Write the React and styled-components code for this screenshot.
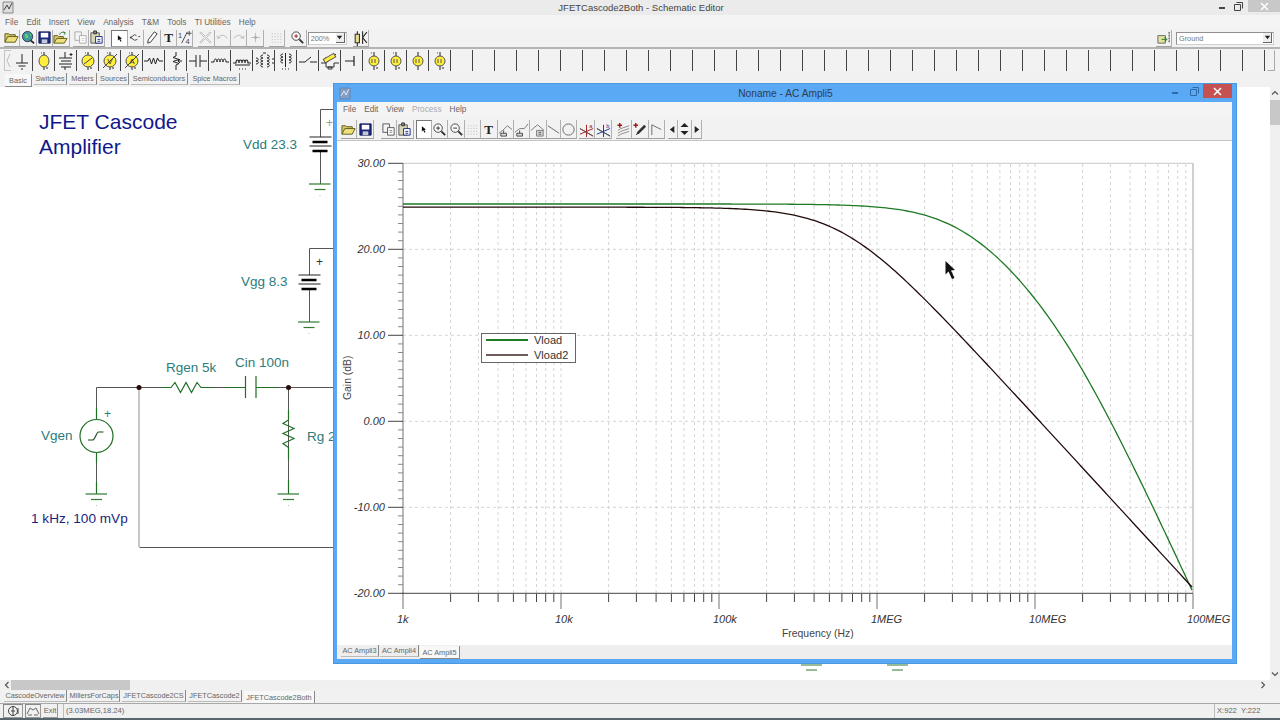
import React from "react";
import styled, { createGlobalStyle } from "styled-components";

const GlobalStyle = createGlobalStyle`
  html, body { margin: 0; padding: 0; background: #fff; overflow: hidden; }
  * { box-sizing: border-box; }
  body { font-family: "Liberation Sans", Arial, sans-serif; }
`;

const Screen = styled.div`
  position: relative;
  width: 1280px;
  height: 720px;
  overflow: hidden;
  display: flex;
  flex-direction: column;
  background: #fff;
  color: #444;
`;

const Svg = styled.svg`
  display: block;
  flex: none;
`;

/* title bar */
const TitleBar = styled.div`
  height: 15px;
  display: grid;
  grid-template-columns: 1fr auto 1fr;
  align-items: center;
  background: #ebebeb;
  padding-left: 2px;
`;
const TitleText = styled.div`
  font-size: 9.5px;
  color: #444;
`;
const Controls = styled.div`
  display: flex;
  justify-content: flex-end;
  align-items: stretch;
  align-self: start;
  height: ${(p) => p.$h}px;
`;
const CtlButton = styled.div`
  width: ${(p) => p.$w}px;
  display: flex;
  align-items: center;
  justify-content: center;
  background: ${(p) => p.$bg || "transparent"};
`;

/* menus */
const MenuBar = styled.div`
  display: flex;
  align-items: center;
  gap: ${(p) => p.$gap}px;
  height: ${(p) => p.$h}px;
  padding-left: ${(p) => p.$pl}px;
  background: #f4f4f4;
  font-size: 8.2px;
  color: #666;
`;
const MenuItem = styled.span`
  color: ${(p) => (p.$off ? "#aaa" : "inherit")};
  white-space: nowrap;
`;

/* tool rows */
const ToolRow = styled.div`
  display: flex;
  align-items: center;
  height: 20px;
  background: #f2f2f2;
  border-bottom: 2px solid #b4b4b4;
  padding-left: 4px;
`;
const ToolGroup = styled.div`
  display: flex;
  margin-left: ${(p) => p.$ml || 0}px;
`;
const ToolButton = styled.div`
  width: ${(p) => p.$w || 16.4}px;
  height: 17px;
  display: flex;
  align-items: center;
  justify-content: center;
  background: ${(p) => (p.$on ? "#fff" : "transparent")};
  border-right: 1px solid #b0b0b0;
  border-bottom: 1px solid #a0a0a0;
  border-left: ${(p) => (p.$on ? "1px solid #777" : "none")};
  border-top: ${(p) => (p.$on ? "1px solid #777" : "none")};
`;
const Combo = styled.div`
  width: ${(p) => p.$w}px;
  height: 13px;
  margin-left: ${(p) => p.$ml || 0}px;
  margin-right: ${(p) => p.$mr || 0}px;
  display: flex;
  align-items: center;
  justify-content: space-between;
  background: #fff;
  border: 1px solid #909090;
  border-bottom-color: #d0d0d0;
  border-right-color: #d0d0d0;
  font-size: 7.3px;
  color: #777;
  padding-left: 2px;
`;
const ComboArrow = styled.div`
  width: 9px;
  height: 10px;
  display: flex;
  align-items: center;
  justify-content: center;
  background: #eee;
  border-right: 1px solid #666;
  border-bottom: 1px solid #666;
  margin-right: 1px;
`;
const Spring = styled.div`
  flex: 1;
`;

/* component palette */
const PaletteRow = styled.div`
  display: flex;
  height: 24px;
  align-items: flex-start;
  padding: 1px 0 0 4px;
  background: #f2f2f2;
`;
const PaletteGrip = styled.div`
  width: 7px;
  height: 21px;
  display: flex;
  align-items: center;
  justify-content: center;
  border: 1px solid #c4c4c4;
  border-right: none;
`;
const PaletteCell = styled.div`
  width: 22px;
  height: 21px;
  flex: none;
  display: flex;
  align-items: center;
  justify-content: center;
  border-right: 1px solid #444;
`;
const PaletteEnd = styled.div`
  width: 8px;
  height: 21px;
  margin-left: 2px;
  border: 1px solid #aaa;
  border-left-color: #eee;
  border-top-color: #eee;
`;

/* tabs */
const TabRow = styled.div`
  display: flex;
  height: ${(p) => p.$h}px;
  padding-left: ${(p) => p.$pl}px;
  align-items: flex-start;
  background: ${(p) => p.$bg || "#f1f1f1"};
  flex: none;
`;
const Tab = styled.div`
  width: ${(p) => p.$w}px;
  height: ${(p) => (p.$on ? 13 : 12)}px;
  margin-right: ${(p) => p.$mr ?? 2}px;
  margin-top: ${(p) => (p.$on ? 1 : 0)}px;
  display: flex;
  align-items: center;
  justify-content: center;
  font-size: 7.3px;
  color: #666;
  white-space: nowrap;
  background: ${(p) => (p.$on ? "#f8f8f8" : "transparent")};
  border-right: 1px solid #888;
  border-bottom: ${(p) => (p.$on ? "1px solid #888" : "1px solid #bbb")};
`;

/* canvas */
const Canvas = styled.div`
  flex: 1;
  min-height: 0;
  display: flex;
  background: #fff;
`;
const Sheet = styled.div`
  flex: 1;
  min-width: 0;
`;
const VScroll = styled.div`
  width: 10px;
  display: flex;
  flex-direction: column;
  align-items: center;
  background: #f0f0f0;
  padding: 2px 0;
`;
const VThumb = styled.div`
  width: 100%;
  height: 25px;
  margin-top: 3px;
  background: #c8c8c8;
`;
const HScroll = styled.div`
  flex: none;
  height: 10px;
  display: flex;
  align-items: center;
  background: #f0f0f0;
  padding: 0 13px 0 3px;
`;
const HThumb = styled.div`
  width: 119px;
  height: 10px;
  background: #c8c8c8;
`;

/* status */
const StatusBar = styled.div`
  flex: none;
  height: 17px;
  display: flex;
  align-items: center;
  background: #f0f0f0;
  border-top: 1px solid #a8a8a8;
  border-bottom: 2px solid #56666c;
  padding: 0 2px 0 3px;
  font-size: 7.6px;
  color: #666;
`;
const StatusButton = styled.div`
  width: ${(p) => p.$w}px;
  height: 14px;
  margin-right: 2px;
  display: flex;
  align-items: center;
  justify-content: center;
  border-right: 1px solid #999;
  border-bottom: 1px solid #999;
  border-left: ${(p) => (p.$in ? "1px solid #888" : "none")};
  border-top: ${(p) => (p.$in ? "1px solid #888" : "none")};
`;
const StatusText = styled.div`
  margin-left: ${(p) => p.$ml || 0}px;
  width: ${(p) => p.$w || "auto"};
  height: 14px;
  line-height: 13px;
  padding-left: 2px;
  border-left: 1px solid #bbb;
  white-space: nowrap;
`;

/* floating AC window */
const Window = styled.div`
  position: absolute;
  left: 333px;
  top: 83px;
  width: 904px;
  height: 581px;
  display: flex;
  flex-direction: column;
  background: #5aa9f4;
  border: 1px solid #4b98e2;
  padding: 0 4px 4px 3px;
`;
const WinTitle = styled.div`
  flex: none;
  height: 18px;
  display: grid;
  grid-template-columns: 1fr auto 1fr;
  align-items: start;
  padding-left: 2px;
`;
const WinIcon = styled(Svg)`
  margin-top: 3px;
`;
const WinTitleText = styled.div`
  font-size: 10.2px;
  line-height: 20px;
  color: #2c3e50;
`;
const WinToolRow = styled.div`
  flex: none;
  display: flex;
  height: 24px;
  align-items: center;
  padding: 2px 0 0 4px;
  background: #f2f2f2;
  border-bottom: 1px solid #c4c4c4;
`;
const WinButton = styled(ToolButton)`
  height: 19px;
`;
const PlotArea = styled.div`
  position: relative;
  flex: none;
  height: 504px;
  background: #fff;
`;
const Legend = styled.div`
  position: absolute;
  left: 144px;
  top: 192px;
  width: 95px;
  height: 30px;
  padding-left: 4px;
  background: #fff;
  border: 1px solid #666;
  font-size: 11px;
  color: #333;
`;
const LegendRow = styled.div`
  display: flex;
  align-items: center;
  gap: 6px;
  height: 15px;
  &:first-child {
    margin-top: -2px;
  }
`;
const LegendLine = styled.div`
  width: 42px;
  height: 2px;
  background: ${(p) => p.$color};
`;

/* icons */
const Icon = ({ size = 15, vb = 16, children }) => (
  <Svg width={size} height={size} viewBox={`0 0 ${vb} ${vb}`}>{children}</Svg>
);

const FolderIcon = () => (
  <Icon>
    <path d="M1 13V4h4l1 1h6v3" fill="#d8c868" stroke="#5c5c20" />
    <path d="M1 13l3-6h11l-3 6z" fill="#efe07a" stroke="#5c5c20" />
  </Icon>
);
const GlobeIcon = () => (
  <Icon>
    <circle cx="7" cy="7" r="5.5" fill="#3a9a9a" stroke="#335" />
    <path d="M4 4l3 1 1 3-3 1zM9 3l2 2-1 1z" fill="#6fd06f" />
    <path d="M10 11l4 3" stroke="#333" strokeWidth="2" />
  </Icon>
);
const SaveIcon = () => (
  <Icon>
    <path d="M2 2h12v12H2z" fill="#1c2a80" stroke="#111a55" />
    <path d="M4 3h8v5H4z" fill="#fff" />
    <path d="M5 10h6v4H5z" fill="#c4c8d8" />
  </Icon>
);
const FolderArrowIcon = () => (
  <Icon>
    <path d="M1 14V6h4l1 1h5v2" fill="#d8c868" stroke="#5c5c20" />
    <path d="M1 14l3-5h11l-3 5z" fill="#efe07a" stroke="#5c5c20" />
    <path d="M7 5c1-3 4-3 6-2m0 0l-2-1m2 1l-1 2" fill="none" stroke="#2a7a2a" />
  </Icon>
);
const CopyIcon = ({ dim }) => (
  <Icon>
    <path d="M2 2h7v9H2z" fill="#f4f4f4" stroke={dim ? "#aaa" : "#555"} />
    <path d="M7 6h7v8H7z" fill="#fff" stroke={dim ? "#aaa" : "#555"} />
    <path d="M9 9h3M9 11h3" stroke={dim ? "#ccc" : "#888"} />
  </Icon>
);
const PasteIcon = () => (
  <Icon>
    <path d="M2 3h9v11H2z" fill="#d8d4b8" stroke="#555" />
    <path d="M5 1h3v3H5z" fill="#888" stroke="#333" />
    <path d="M7 7h7v7H7z" fill="#fff" stroke="#1c2a80" />
    <path d="M9 10h3M9 12h3" stroke="#1c2a80" />
  </Icon>
);
const CursorIcon = () => (
  <Icon size={13}>
    <path d="M6 4l5 4-2 .5 1.5 3-1.3.5L7.8 9 6 10.5z" fill="#111" />
  </Icon>
);
const WireIcon = () => (
  <Icon>
    <path d="M3 8l4-3M3 8l4 3M7 5l2 1M7 11l3-1M11 7h2" stroke="#444" fill="none" />
    <circle cx="3" cy="8" r="1" fill="#444" />
  </Icon>
);
const PenIcon = () => (
  <Icon>
    <path d="M11 2l3 2-7 9-3 1 .5-3.5z" fill="#fff" stroke="#333" />
  </Icon>
);
const LetterIcon = ({ children, color = "#222" }) => (
  <Icon>
    <text x="8" y="13" textAnchor="middle" fontFamily="'Liberation Serif', serif" fontWeight="bold" fontSize="14" fill={color}>
      {children}
    </text>
  </Icon>
);
const QuarterIcon = () => (
  <Icon>
    <text x="1" y="9" fontFamily="'Liberation Sans', sans-serif" fontSize="8" fill="#444">1</text>
    <text x="9" y="15" fontFamily="'Liberation Sans', sans-serif" fontSize="8" fill="#444">4</text>
    <path d="M5 14L11 2M13 1v5M10.5 3.5h5" stroke="#444" fill="none" />
  </Icon>
);
const GrayCrossIcon = () => (
  <Icon>
    <path d="M3 2l5 5 5-5 1 1-5 5 5 5-1 1-5-5-5 5-1-1 5-5-5-5z" fill="#f4f4f4" stroke="#bbb" />
  </Icon>
);
const TurnIcon = ({ flip }) => (
  <Icon>
    <path
      d={flip ? "M13 9c-1-4-7-5-10 0m10 0l-3-1m3 1l1-3" : "M3 9c1-4 7-5 10 0m-10 0l3-1m-3 1l-1-3"}
      fill="none"
      stroke="#bbb"
    />
  </Icon>
);
const GrayPlusIcon = () => (
  <Icon>
    <path d="M8 3v10M3 8h10" stroke="#bbb" />
    <circle cx="8" cy="8" r="1.5" fill="#aaa" />
  </Icon>
);
const DotsIcon = () => (
  <Icon>
    <path d="M3 4h10M3 7h10M3 10h10M3 13h10" stroke="#bbb" strokeDasharray="1 2" />
  </Icon>
);
const ZoomIcon = ({ minus, mark }) => (
  <Icon>
    <circle cx="6.5" cy="6.5" r="4.5" fill="#f8f8f8" stroke="#444" />
    <path d={minus ? "M4.5 6.5h4" : "M4.500 6.5h4M6.5 4.5v4"} stroke={mark || "#333"} />
    <path d="M10 10l4 4" stroke="#333" strokeWidth="2" />
  </Icon>
);
const TunerIcon = () => (
  <Icon size={17}>
    <path d="M3 5h4v8H3z" fill="#eadf8a" stroke="#333" />
    <path d="M5 2v3M5 13v3M10 2v12M10 8l4-5M10 8l4 5" stroke="#222" fill="none" />
  </Icon>
);
const PickIcon = () => (
  <Icon>
    <path d="M2 6h8v8H2z" fill="#e4e4a0" stroke="#666" />
    <path d="M6 10h5M9 8l3 2-3 2" stroke="#2a7a2a" fill="none" />
    <path d="M14 2v12" stroke="#222" strokeDasharray="2 1" />
  </Icon>
);
const MeasureIcon = ({ tall }) => (
  <Icon>
    <path d={tall ? "M1 11l5-4h5l4-5" : "M1 12l5-4 4-4 5 4"} fill="none" stroke="#777" />
    <path d="M3 12h6v3H3z" fill="#ddd" stroke="#444" />
    <path d="M6 9v3" stroke="#444" />
  </Icon>
);
const HouseIcon = () => (
  <Icon>
    <path d="M1 9l7-6 7 6" fill="none" stroke="#777" />
    <path d="M7 9h7v6H7z" fill="#ddd" stroke="#777" />
    <path d="M9 11h3M9 13h3" stroke="#555" />
  </Icon>
);
const SlashIcon = () => (
  <Icon>
    <path d="M2 4l12 8" stroke="#666" />
  </Icon>
);
const CircleIcon = () => (
  <Icon>
    <circle cx="8" cy="8" r="6" fill="none" stroke="#666" />
  </Icon>
);
const CursorLineIcon = ({ color, letter }) => (
  <Icon>
    <path d="M8 3v13M1 7l14 8M1 13l14-6" stroke={color} fill="none" />
    <path d="M1 7l14 8" stroke="#555" />
    <text x="11" y="6" fontSize="6" fontFamily="'Liberation Sans', sans-serif" fill={color}>{letter}</text>
  </Icon>
);
const AddCurveIcon = ({ pen }) => (
  <Icon>
    <path d="M4 1v5M1.5 3.5h5" stroke="#a01818" strokeWidth="1.5" />
    {pen ? (
      <path d="M13 3l2 2-7 7-4 2 2-4z" fill="#333" />
    ) : (
      <path d="M2 9c4-3 7-3 12-5M2 12c4-3 7-3 12-5M2 15c4-3 7-3 12-5" fill="none" stroke="#888" />
    )}
  </Icon>
);
const FlagIcon = () => (
  <Icon>
    <path d="M3 14V3l10 5" fill="none" stroke="#666" />
  </Icon>
);
const SmallArrow = ({ d }) => (
  <Icon size={9} vb={10}>
    <path d={d} fill="#222" />
  </Icon>
);
const ScrollGlyph = ({ d }) => (
  <Icon size={8} vb={8}>
    <path d={d} fill="none" stroke="#555" strokeWidth="1.2" />
  </Icon>
);

/* palette symbols */
const Sym = ({ children }) => (
  <Svg width="20" height="20" viewBox="0 0 20 20" stroke="#222" fill="none">{children}</Svg>
);
const YellowBulb = ({ children, dot = true, rx = 5, ry = 6 }) => (
  <Sym>
    <path d="M10 1v18" />
    {dot && <path d="M7 2h.8M12 17h2" strokeWidth="1.2" />}
    <ellipse cx="10" cy="10" rx={rx} ry={ry} fill="#ffef3c" stroke="#555" />
    {children}
  </Sym>
);
const meterText = (letter) => (
  <text x="10" y="13" textAnchor="middle" fontSize="8" fill="#333" stroke="none" fontFamily="'Liberation Sans', sans-serif">
    {letter}
  </text>
);
const paletteIcons = [
  <Sym><path d="M10 3v9M4 12h12M6.5 15h7M9 18h2" /></Sym>,
  <YellowBulb />,
  <Sym><path d="M9 1v6M3 7h13M5 10h10M3 13h13M5 16h10M9 16v3M15 2v3M13.5 3.5h3" /></Sym>,
  <YellowBulb rx={6} ry={6}><path d="M6 13l8-6" stroke="#444" /></YellowBulb>,
  <YellowBulb rx={6} ry={6}><path d="M3 17L17 3" stroke="#444" />{meterText("V")}</YellowBulb>,
  <YellowBulb rx={6} ry={6}><path d="M3 17L17 3" stroke="#444" />{meterText("A")}</YellowBulb>,
  <Sym><path d="M0 10h4l1.5-3 2 6 2-6 2 6 2-6 1.5 3h4" /></Sym>,
  <Sym><path d="M10 1v4l-3 1.5 6 2-6 2 6 2-3 1.5v5M16 10h-4M14 8l-2 2 2 2" /></Sym>,
  <Sym><path d="M1 10h7M8 4v12M12 4v12M12 10h7" /></Sym>,
  <Sym><path d="M1 11h3c0-4 3-4 3 0 0-4 3-4 3 0 0-4 3-4 3 0 0-4 3-4 3 0h3" /></Sym>,
  <Sym><path d="M1 12h3c0-4 3-4 3 0 0-4 3-4 3 0 0-4 3-4 3 0 0-4 3-4 3 0h3M3 14h15" strokeWidth="1.2" /><path d="M7 18h1M10 18h1M13 18h1" /></Sym>,
  <Sym><path d="M2 7c3 0 3 3 0 3 3 0 3 3 0 3M9 4c-3 0-3 3 0 3-3 0-3 3 0 3-3 0-3 3 0 3-3 0-3 3 0 3M13 4c3 0 3 3 0 3 3 0 3 3 0 3 3 0 3 3 0 3 3 0 3 3 0 3M18 8h2M18 12h2" /><path d="M9 2h3" /></Sym>,
  <Sym><path d="M7 3c-3 0-3 3 0 3-3 0-3 3 0 3-3 0-3 3 0 3M13 3c3 0 3 3 0 3 3 0 3 3 0 3 3 0 3 3 0 3M9.5 2v14" /><path d="M6 18h1M9 18h1M12 18h1" /></Sym>,
  <Sym><path d="M1 11h6M12 11h7M7 11l6-5" /></Sym>,
  <Sym><path d="M1 12h5l10-9M6 6v10h8v-4M14 12h5M8 16h4v2H8z" stroke="#333" /><path d="M4 5h12v4H4z" fill="#ffef3c" stroke="#555" transform="rotate(-30 10 8)" /></Sym>,
  <Sym><path d="M3 10h9M12 5v10" strokeWidth="1.2" /></Sym>,
  <YellowBulb ry={5}><path d="M8 8v4M11 8v4" stroke="#555" /></YellowBulb>,
  <YellowBulb ry={5}><path d="M8 8v4M11 8v4" stroke="#555" /></YellowBulb>,
  <YellowBulb ry={5} dot={false}><path d="M8 8v4M11 8v4" stroke="#555" /></YellowBulb>,
  <YellowBulb ry={5}><path d="M8 8v4M11 8v4" stroke="#555" /></YellowBulb>,
];

const PaletteBlankCount = 37;

/* schematic */
const Wires = styled.g`
  fill: none;
  stroke: #555;
  stroke-width: 1;
`;
const Parts = styled.g`
  fill: none;
  stroke: #1f6f25;
  stroke-width: 1.2;
`;
const Label = styled.text`
  font-family: "Liberation Sans", Arial, sans-serif;
  font-size: ${(p) => p.$size || 13.5}px;
  fill: ${(p) => p.$color || "#2b7c7c"};
`;

const Ground = ({ x, y, color = "#2f7a30" }) => (
  <g stroke={color} fill="none">
    <path d={`M${x - 11} ${y}h21.5`} strokeWidth="1.2" />
    <path d={`M${x - 5.5} ${y + 5.5}h11`} strokeWidth="1.2" />
    <path d={`M${x} ${y + 11}v1`} stroke="#bbb" />
  </g>
);
const Battery = ({ x, y }) => (
  <g fill="none" stroke="#222">
    <path d={`M${x - 11} ${y}h22M${x - 11} ${y + 9}h22`} strokeWidth="1" />
    <path d={`M${x - 8} ${y + 5}h15M${x - 8} ${y + 14}h15`} strokeWidth="2.5" stroke="#000" />
  </g>
);

const Schematic = () => (
  <Svg width="1270" height="593" viewBox="0 87 1270 593">
    <Label x="39" y="129" $size={21} $color="#10188c">JFET Cascode</Label>
    <Label x="39" y="154" $size={21} $color="#10188c">Amplifier</Label>

    {/* Vdd */}
    <Wires>
      <path d="M333 109.5H320.5V137M320.5 151V184" />
    </Wires>
    <Battery x={320.5} y={137} />
    <Ground x={320} y={184} />
    <Label x="243" y="149">Vdd 23.3</Label>
    <Label x="326" y="127" $size={12} $color="#999">+</Label>

    {/* Vgg */}
    <Wires>
      <path d="M333 248.5H309.5V275M309.5 289V322" />
    </Wires>
    <Battery x={309.5} y={275} />
    <Ground x={309} y={322} />
    <Label x="241" y="286">Vgg 8.3</Label>
    <Label x="316" y="266" $size={12} $color="#333">+</Label>

    {/* input network */}
    <Wires>
      <path d="M96.5 419V387.5H161M214 387.5H225M277 387.5H333M96.5 453V494M288.5 387.5V494" />
      <path d="M139.5 547.5H333" />
    </Wires>
    <path d="M139 387.5V547" stroke="#b4b4b4" strokeWidth="1.5" fill="none" />
    <Parts>
      <path d="M161 387.5h10l4-5 5.5 10 5.500-10 5.500 10 5.500-10 4 5h13" />
      <path d="M225 387.5h20M245.5 376v22M256 376v22M256 387.5h21" />
      <path d="M288.5 410v10l-5.500 3.500 11 5-11 5 11 5-11 5 5.500 4v12" />
      <circle cx="96.5" cy="436" r="16.5" fill="#fff" />
      <path d="M96.5 408v11M96.5 453v10M96.5 482v12M288.5 480v14" />
      <path d="M88 440h4.500c2.500 0 4-8 6-8h5" stroke="#1a4a1a" />
    </Parts>
    <Ground x={96.5} y={494} />
    <Ground x={288.5} y={494} />
    <circle cx="139" cy="387.5" r="2.5" fill="#2a0a0a" />
    <circle cx="288.5" cy="387.5" r="2.5" fill="#2a0a0a" />
    <Label x="104" y="418" $size={12}>+</Label>
    <Label x="166" y="372">Rgen 5k</Label>
    <Label x="235" y="367">Cin 100n</Label>
    <Label x="41" y="440">Vgen</Label>
    <Label x="307" y="441">Rg 2</Label>
    <Label x="31" y="523" $size={13.6} $color="#1a1f80">1 kHz, 100 mVp</Label>

    {/* ground symbols under the floating window */}
    <path d="M801 665h21M806 670h11M887 665h21M892 670h11" stroke="#2f7a30" fill="none" strokeWidth="1.2" />
  </Svg>
);

/* chart */
const AxisText = styled.text`
  font-family: "Liberation Sans", Arial, sans-serif;
  font-size: 11px;
  font-style: italic;
  fill: #333;
`;
const AxisTitle = styled.text`
  font-family: "Liberation Sans", Arial, sans-serif;
  font-size: 10.4px;
  fill: #444;
`;

const X0 = 403;
const DEC = 158;
const Y_TOP = 163.3;
const Y_STEP = 86;
const decades = ["1k", "10k", "100k", "1MEG", "10MEG", "100MEG"];
const yLabels = ["30.00", "20.00", "10.00", "0.00", "-10.00", "-20.00"];

// bode curve, poles in Hz
const curve = (gain, poles) => {
  let d = "";
  for (let x = X0; x <= X0 + DEC * 5; x += 3) {
    const f = 1000 * Math.pow(10, (x - X0) / DEC);
    let db = gain;
    poles.forEach((p) => {
      db -= 10 * Math.log10(1 + (f / p) * (f / p));
    });
    d += `${d ? "L" : "M"}${x} ${(Y_TOP + (30 - db) * (Y_STEP / 10)).toFixed(2)}`;
  }
  return d;
};

const minorX = [];
for (let d = 0; d < 5; d++) {
  for (let k = 2; k < 10; k++) minorX.push(X0 + DEC * (d + Math.log10(k)));
}
const minorY = [];
for (let i = 1; i < 50; i++) if (i % 10 !== 0) minorY.push(Y_TOP + (Y_STEP / 10) * i);

const Chart = () => (
  <Svg width="896" height="504" viewBox="337 141 896 504">
    <g stroke="#d4d4d4" strokeDasharray="3 3" fill="none">
      {minorX.map((x) => <path key={x} d={`M${x.toFixed(1)} 164V593`} />)}
      {decades.slice(1, 5).map((_, i) => <path key={i} d={`M${X0 + DEC * (i + 1)} 164V593`} />)}
      {yLabels.slice(1, 5).map((_, i) => <path key={i} d={`M403 ${Y_TOP + Y_STEP * (i + 1)}H1193`} />)}
    </g>
    <path d={`M403 ${Y_TOP}H1193`} stroke="#c8c8c8" />
    <path d="M1193 163V609" stroke="#d0d0d0" strokeWidth="2" />
    <path d="M403 163V594" stroke="#b8b8b8" strokeWidth="2" />
    <path d={`M402 ${Y_TOP + Y_STEP * 5}H1193`} stroke="#444" />

    {minorY.map((y) => <path key={y} d={`M398 ${y.toFixed(1)}H403`} stroke="#888" />)}
    {minorX.map((x) => <path key={x} d={`M${x.toFixed(1)} 594V602`} stroke="#444" />)}
    {yLabels.map((t, i) => (
      <g key={t}>
        <path d={`M388 ${Y_TOP + Y_STEP * i}H403`} stroke="#444" />
        <AxisText x="385" y={Y_TOP + Y_STEP * i + 4} textAnchor="end">{t}</AxisText>
      </g>
    ))}
    {decades.map((t, i) => (
      <g key={t}>
        <path d={`M${X0 + DEC * i} 594V609`} stroke="#b8b8b8" strokeWidth="2" />
        <AxisText x={X0 + DEC * i - 6} y="623">{t}</AxisText>
      </g>
    ))}

    <AxisTitle x="782" y="637">Frequency (Hz)</AxisTitle>
    <AxisTitle x="351" y="400" transform="rotate(-90 351 400)">Gain (dB)</AxisTitle>

    <path d={curve(25.27, [3.5e6, 16e6])} fill="none" stroke="#1e7a24" strokeWidth="1.3" />
    <path d={curve(24.9, [6.1e5])} fill="none" stroke="#220a0a" strokeWidth="1.3" />

    <path d="M945.5 261l9.500 9-4 .5 3.500 7.500-2.500 1-3.500-7.500-3 3z" fill="#111" />
  </Svg>
);

const WinGlyph = ({ kind, color = "#444" }) => {
  if (kind === "min") return <Svg width="8" height="8" viewBox="0 0 8 8"><path d="M1 6h6" stroke={color} strokeWidth="2" /></Svg>;
  if (kind === "max") {
    return (
      <Svg width="9" height="9" viewBox="0 0 9 9" fill="none" stroke={color}>
        <path d="M2.5 .5h6v6M.5 2.5h6v6h-6z" />
      </Svg>
    );
  }
  return <Svg width="9" height="9" viewBox="0 0 9 9"><path d="M1 1l7 7M8 1L1 8" stroke={color} strokeWidth="1.5" /></Svg>;
};

const App = () => (
  <Screen>
    <GlobalStyle />

    <TitleBar>
      <Svg width="12" height="13" viewBox="0 0 12 13">
        <path d="M1 1h10v11H1z" fill="#ddd" stroke="#888" />
        <path d="M2 9l3-5 2 4 3-6" fill="none" stroke="#444" />
      </Svg>
      <TitleText>JFETCascode2Both - Schematic Editor</TitleText>
      <Controls $h={12}>
        <CtlButton $w={16}><WinGlyph kind="min" /></CtlButton>
        <CtlButton $w={16}><WinGlyph kind="max" /></CtlButton>
        <CtlButton $w={2} />
        <CtlButton $w={32} $bg="#c8c8c8"><WinGlyph kind="close" color="#fff" /></CtlButton>
      </Controls>
    </TitleBar>

    <MenuBar $h={14} $gap={8.2} $pl={5}>
      {["File", "Edit", "Insert", "View", "Analysis", "T&M", "Tools", "TI Utilities", "Help"].map((m) => (
        <MenuItem key={m}>{m}</MenuItem>
      ))}
    </MenuBar>

    <ToolRow>
      <ToolGroup>
        <ToolButton><FolderIcon /></ToolButton>
        <ToolButton><GlobeIcon /></ToolButton>
        <ToolButton><SaveIcon /></ToolButton>
        <ToolButton><FolderArrowIcon /></ToolButton>
      </ToolGroup>
      <ToolGroup $ml={3}>
        <ToolButton><CopyIcon dim /></ToolButton>
        <ToolButton><PasteIcon /></ToolButton>
      </ToolGroup>
      <ToolGroup $ml={6}>
        <ToolButton $on><CursorIcon /></ToolButton>
        <ToolButton><WireIcon /></ToolButton>
        <ToolButton><PenIcon /></ToolButton>
        <ToolButton><LetterIcon>T</LetterIcon></ToolButton>
        <ToolButton><QuarterIcon /></ToolButton>
      </ToolGroup>
      <ToolGroup $ml={5}>
        <ToolButton><GrayCrossIcon /></ToolButton>
        <ToolButton><TurnIcon /></ToolButton>
        <ToolButton><TurnIcon flip /></ToolButton>
        <ToolButton><GrayPlusIcon /></ToolButton>
      </ToolGroup>
      <ToolGroup $ml={5}>
        <ToolButton><DotsIcon /></ToolButton>
      </ToolGroup>
      <ToolGroup $ml={5}>
        <ToolButton><ZoomIcon mark="#a01818" /></ToolButton>
      </ToolGroup>
      <Combo $w={39} $ml={1}>
        200%
        <ComboArrow><SmallArrow d="M2 3h6L5 7z" /></ComboArrow>
      </Combo>
      <ToolGroup $ml={6}>
        <ToolButton><TunerIcon /></ToolButton>
      </ToolGroup>
      <Spring />
      <ToolGroup>
        <ToolButton><PickIcon /></ToolButton>
      </ToolGroup>
      <Combo $w={98} $ml={4} $mr={6}>
        Ground
        <ComboArrow><SmallArrow d="M2 3h6L5 7z" /></ComboArrow>
      </Combo>
    </ToolRow>

    <PaletteRow>
      <PaletteGrip>
        <Svg width="5" height="15" viewBox="0 0 5 15"><path d="M4 1L1 7.5 4 14" fill="none" stroke="#bbb" /></Svg>
      </PaletteGrip>
      {paletteIcons.map((icon, i) => <PaletteCell key={i}>{icon}</PaletteCell>)}
      {Array.from({ length: PaletteBlankCount }, (_, i) => <PaletteCell key={i} />)}
      <PaletteEnd />
    </PaletteRow>

    <TabRow $h={14} $pl={5}>
      <Tab $w={27} $on>Basic</Tab>
      <Tab $w={33}>Switches</Tab>
      <Tab $w={28}>Meters</Tab>
      <Tab $w={30}>Sources</Tab>
      <Tab $w={57}>Semiconductors</Tab>
      <Tab $w={50}>Spice Macros</Tab>
    </TabRow>

    <Canvas>
      <Sheet><Schematic /></Sheet>
      <VScroll>
        <ScrollGlyph d="M1 5.5l3-3 3 3" />
        <VThumb />
        <Spring />
        <ScrollGlyph d="M1 2.5l3 3 3-3" />
      </VScroll>
    </Canvas>

    <HScroll>
      <ScrollGlyph d="M5.5 1l-3 3 3 3" />
      <HThumb />
      <Spring />
      <ScrollGlyph d="M2.5 1l3 3-3 3" />
    </HScroll>

    <TabRow $h={13} $pl={4}>
      <Tab $w={63}>CascodeOverview</Tab>
      <Tab $w={51}>MillersForCaps</Tab>
      <Tab $w={64}>JFETCascode2CS</Tab>
      <Tab $w={54}>JFETCascode2</Tab>
      <Tab $w={71} $on>JFETCascode2Both</Tab>
    </TabRow>

    <StatusBar>
      <StatusButton $w={20} $in>
        <Svg width="14" height="12" viewBox="0 0 14 12" fill="none" stroke="#444">
          <circle cx="7" cy="6" r="4.5" />
          <path d="M5 6h4M7 1v10M12 3v6" />
        </Svg>
      </StatusButton>
      <StatusButton $w={16} $in>
        <Svg width="14" height="12" viewBox="0 0 14 12" fill="none" stroke="#666">
          <path d="M1 9l3-6 3 2 3-2 3 6M2 10h4M8 10h4" />
        </Svg>
      </StatusButton>
      <StatusButton $w={15}>Exit</StatusButton>
      <StatusText $ml={3}>(3.03MEG,18.24)</StatusText>
      <Spring />
      <StatusText $w="64px">X:922&nbsp;&nbsp;Y:222</StatusText>
    </StatusBar>

    <Window>
      <WinTitle>
        <WinIcon width="12" height="13" viewBox="0 0 12 13">
          <path d="M1 1h10v11H1z" fill="#7f9fc8" stroke="#6a85aa" />
          <path d="M2 9l3-5 2 4 3-6" fill="none" stroke="#e8e8f0" />
        </WinIcon>
        <WinTitleText>Noname - AC Ampli5</WinTitleText>
        <Controls $h={14}>
          <CtlButton $w={20}><WinGlyph kind="min" color="#2f6aa8" /></CtlButton>
          <CtlButton $w={18}><WinGlyph kind="max" color="#2f6aa8" /></CtlButton>
          <CtlButton $w={29} $bg="#c75050"><WinGlyph kind="close" color="#fff" /></CtlButton>
        </Controls>
      </WinTitle>

      <MenuBar $h={15} $gap={8} $pl={6}>
        <MenuItem>File</MenuItem>
        <MenuItem>Edit</MenuItem>
        <MenuItem>View</MenuItem>
        <MenuItem $off>Process</MenuItem>
        <MenuItem>Help</MenuItem>
      </MenuBar>

      <WinToolRow>
        <ToolGroup>
          <WinButton><FolderIcon /></WinButton>
          <WinButton><SaveIcon /></WinButton>
        </ToolGroup>
        <ToolGroup $ml={7}>
          <WinButton><CopyIcon /></WinButton>
          <WinButton><PasteIcon /></WinButton>
        </ToolGroup>
        <ToolGroup $ml={2}>
          <WinButton $on><CursorIcon /></WinButton>
          <WinButton><ZoomIcon /></WinButton>
          <WinButton><ZoomIcon minus /></WinButton>
          <WinButton><DotsIcon /></WinButton>
          <WinButton><LetterIcon>T</LetterIcon></WinButton>
          <WinButton><MeasureIcon /></WinButton>
          <WinButton><MeasureIcon tall /></WinButton>
          <WinButton><HouseIcon /></WinButton>
          <WinButton $w={14}><SlashIcon /></WinButton>
          <WinButton><CircleIcon /></WinButton>
        </ToolGroup>
        <ToolGroup $ml={2}>
          <WinButton><CursorLineIcon color="#a01818" letter="a" /></WinButton>
          <WinButton><CursorLineIcon color="#18309a" letter="b" /></WinButton>
        </ToolGroup>
        <ToolGroup $ml={4}>
          <WinButton><AddCurveIcon /></WinButton>
          <WinButton><AddCurveIcon pen /></WinButton>
          <WinButton><FlagIcon /></WinButton>
        </ToolGroup>
        <ToolGroup $ml={3}>
          <WinButton $w={10}><SmallArrow d="M7 1v8L2 5z" /></WinButton>
          <WinButton $w={14}>
            <Svg width="9" height="14" viewBox="0 0 9 14"><path d="M4.5 1l4 4H.5zM4.5 13l4-4H.5z" fill="#222" /></Svg>
          </WinButton>
          <WinButton $w={10}><SmallArrow d="M3 1v8l5-4z" /></WinButton>
        </ToolGroup>
      </WinToolRow>

      <PlotArea>
        <Chart />
        <Legend>
          <LegendRow><LegendLine $color="#1e7a24" />Vload</LegendRow>
          <LegendRow><LegendLine $color="#6e5c5a" />Vload2</LegendRow>
        </Legend>
      </PlotArea>

      <TabRow $h={14} $pl={4} $bg="#eeeeee">
        <Tab $w={38} $mr={1}>AC Ampli3</Tab>
        <Tab $w={39} $mr={1}>AC Ampli4</Tab>
        <Tab $w={40} $on>AC Ampli5</Tab>
      </TabRow>
    </Window>
  </Screen>
);

export default App;
